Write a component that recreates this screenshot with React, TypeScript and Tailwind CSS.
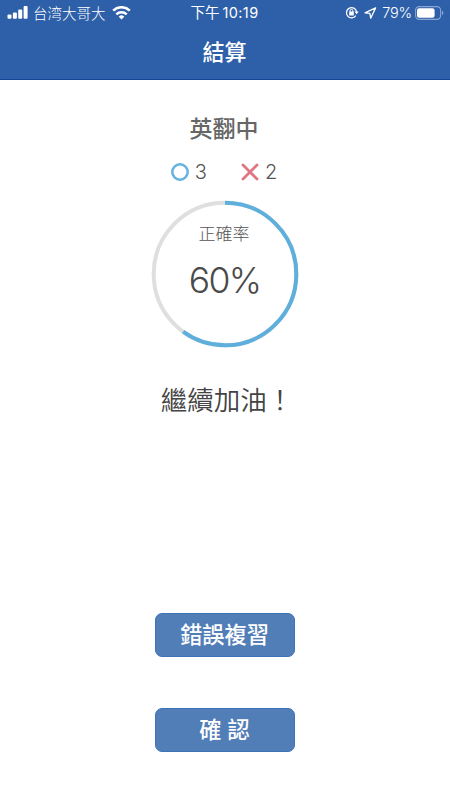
import React from "react";

interface QuizResult {
  title: string;
  correct: number;
  wrong: number;
  message: string;
}

const result: QuizResult = {
  title: "英翻中",
  correct: 3,
  wrong: 2,
  message: "繼續加油！",
};

const StatusBar: React.FC = () => {
  return (
    <div className="grid h-6 grid-cols-[150px_150px_150px] items-center text-[14.5px] leading-6 whitespace-nowrap">
      <div className="flex h-6 items-center pl-[7px]">
        <svg width="21" height="14" viewBox="0 0 21 14" fill="currentColor">
          <rect x="0.5" y="8.5" width="4" height="4.2" rx="1" />
          <rect x="5.9" y="6.5" width="4" height="6.2" rx="1" />
          <rect x="11.2" y="3.5" width="4" height="9.2" rx="1" />
          <rect x="16.6" y="0" width="4" height="12.7" rx="1" />
        </svg>
        <span className="ml-[5px] pt-[2px] font-light">台湾大哥大</span>
        <svg className="ml-[6px]" width="19" height="14" viewBox="0 0 19 14" fill="none" stroke="currentColor">
          <path d="M1.2 4.6a12 12 0 0 1 16.6 0" strokeWidth="2.6" />
          <path d="M4.3 8.4a7.5 7.5 0 0 1 10.4 0" strokeWidth="2.5" />
          <path d="M9.5 13.6l-2.8-2.9a4 4 0 0 1 5.6 0z" fill="currentColor" stroke="none" />
        </svg>
      </div>
      <div className="pt-px pr-px text-center">
        <span>下午</span>
        <span className="ml-[3px] tracking-[0.4px]">10:19</span>
      </div>
      <div className="flex h-6 items-center justify-end pr-[6px]">
        <svg width="14" height="13" viewBox="0 0 14 13" fill="none" stroke="currentColor">
          <path d="M10.8 9.6A5.1 5.1 0 1 1 11.6 5.8" strokeWidth="1.3" />
          <path d="M9.5 5.5h4.2l-2.1 2.7z" fill="currentColor" stroke="none" />
          <rect x="4.2" y="5.6" width="4.6" height="3.8" rx="0.5" fill="currentColor" stroke="none" />
          <path d="M5.1 6V4.8a1.4 1.4 0 0 1 2.8 0V6" strokeWidth="1" />
        </svg>
        <svg className="ml-[5px]" width="13" height="12" viewBox="0 0 13 12" fill="none" stroke="currentColor" strokeLinejoin="round">
          <path d="M11.6 0.9L1 5.8l4.9.5.8 4.9z" strokeWidth="1.3" />
        </svg>
        <span className="ml-[5px] font-[350] tracking-[-0.2px]">79%</span>
        <svg className="ml-[3px]" width="29" height="14" viewBox="0 0 29 14" fill="none">
          <rect x="0.6" y="0.6" width="25" height="12.8" rx="3.6" stroke="#8ba6d5" strokeWidth="1.1" />
          <rect x="2" y="2.2" width="17.6" height="9.6" rx="2.2" fill="#fff" />
          <path d="M27 4.8c1.8.5 1.8 3.9 0 4.4z" fill="#8ba6d5" />
        </svg>
      </div>
    </div>
  );
};

const AccuracyRing: React.FC<{ percent: number }> = ({ percent }) => {
  return (
    <div className="relative h-[148px] w-[148px]">
      <svg className="absolute inset-0 -rotate-90" width="148" height="148" viewBox="0 0 148 148" fill="none" strokeWidth="4">
        <circle cx="74" cy="74" r="71.3" stroke="#dfdfdf" />
        <circle
          cx="74"
          cy="74"
          r="71.3"
          stroke="#5fafdd"
          pathLength={100}
          strokeDasharray={`${percent} 100`}
        />
      </svg>
      <div className="relative flex flex-col items-center pt-[22px] pr-[2px]">
        <p className="text-[17px] leading-6 font-light text-[#555]">正確率</p>
        <p className="mt-[14px] pl-px text-[35.5px] leading-[42px] font-[350] tracking-[-1.7px] text-[#4a4a4a]">{percent}%</p>
      </div>
    </div>
  );
};

const ActionButton: React.FC<{ label: string }> = ({ label }) => {
  return (
    <button className="h-11 w-[140px] rounded-[7px] border border-[#3f73b8] bg-[#527eb8] pr-px pb-px text-[22.2px] leading-8 font-medium text-white">
      {label}
    </button>
  );
};

const App: React.FC = () => {
  const total = result.correct + result.wrong;
  const percent = Math.round((result.correct / total) * 100);

  return (
    <div className="flex h-[800px] w-[450px] flex-col bg-white font-[Inter,'Noto_Sans_CJK_TC',sans-serif]">
      <header className="h-20 border-b border-[#174494] bg-[#2e5fa9] text-white">
        <StatusBar />
        <h1 className="mt-3 pr-px text-center text-[22px] leading-8 font-medium">結算</h1>
      </header>

      <main className="flex flex-1 flex-col items-center">
        <h2 className="mt-[33px] pr-[2px] text-[23px] leading-8 font-medium text-[#666]">{result.title}</h2>

        <div className="mt-[13px] flex h-7 items-center pr-[2px] text-[20px] leading-7 font-[350] text-[#555]">
          <svg width="18" height="18" viewBox="0 0 18 18" fill="none">
            <circle cx="9" cy="9" r="7.7" stroke="#66b3df" strokeWidth="2.5" />
          </svg>
          <span className="ml-[6px]">{result.correct}</span>
          <svg className="ml-[34px]" width="18" height="18" viewBox="0 0 18 18" fill="none">
            <path d="M2 2l14 14M16 2L2 16" stroke="#df7681" strokeWidth="2.8" strokeLinecap="round" />
          </svg>
          <span className="ml-[6px]">{result.wrong}</span>
        </div>

        <div className="mt-[14px]">
          <AccuracyRing percent={percent} />
        </div>

        <p className="mt-8 pl-1 text-[26.5px] leading-10 font-[350] text-[#444]">{result.message}</p>

        <div className="mt-[193px] flex flex-col gap-[51px]">
          <ActionButton label="錯誤複習" />
          <ActionButton label="確 認" />
        </div>
      </main>
    </div>
  );
};

export default App;
